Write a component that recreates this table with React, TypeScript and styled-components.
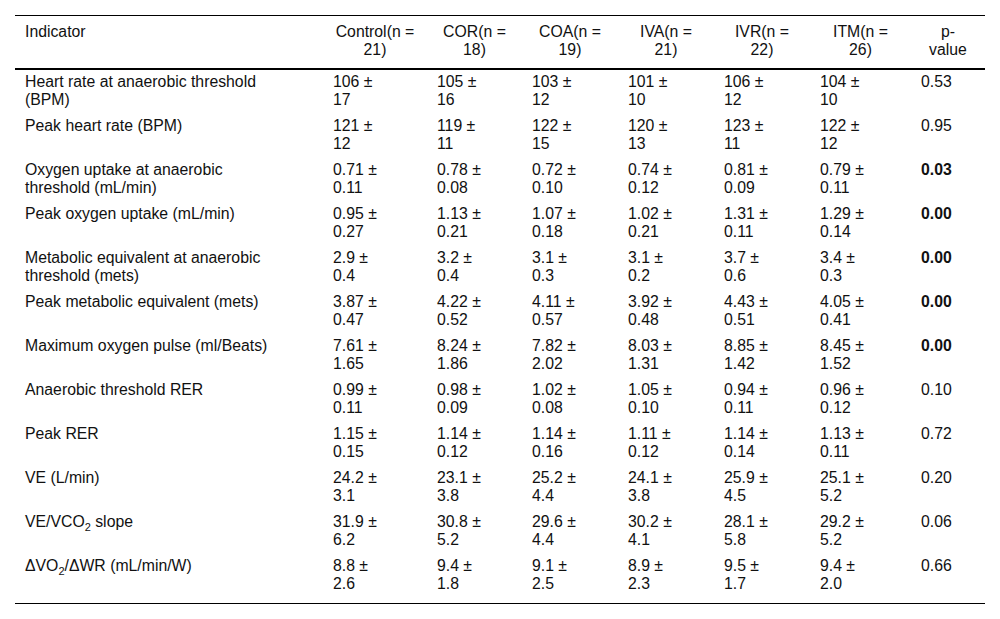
import React from 'react';
import styled, { createGlobalStyle } from 'styled-components';

const GlobalStyle = createGlobalStyle`
  html, body {
    margin: 0;
    padding: 0;
    background: #fff;
  }
`;

type Stat = [string, string];

type Row = {
  label: React.ReactNode;
  values: Stat[];
  p: string;
  significant?: boolean;
};

const groups = [
  { name: 'Control', n: 21, width: 104 },
  { name: 'COR', n: 18, width: 95 },
  { name: 'COA', n: 19, width: 96 },
  { name: 'IVA', n: 21, width: 96 },
  { name: 'IVR', n: 22, width: 96 },
  { name: 'ITM', n: 26, width: 101 },
];

const rows: Row[] = [
  {
    label: 'Heart rate at anaerobic threshold (BPM)',
    values: [['106', '17'], ['105', '16'], ['103', '12'], ['101', '10'], ['106', '12'], ['104', '10']],
    p: '0.53',
  },
  {
    label: 'Peak heart rate (BPM)',
    values: [['121', '12'], ['119', '11'], ['122', '15'], ['120', '13'], ['123', '11'], ['122', '12']],
    p: '0.95',
  },
  {
    label: 'Oxygen uptake at anaerobic threshold (mL/min)',
    values: [['0.71', '0.11'], ['0.78', '0.08'], ['0.72', '0.10'], ['0.74', '0.12'], ['0.81', '0.09'], ['0.79', '0.11']],
    p: '0.03',
    significant: true,
  },
  {
    label: 'Peak oxygen uptake (mL/min)',
    values: [['0.95', '0.27'], ['1.13', '0.21'], ['1.07', '0.18'], ['1.02', '0.21'], ['1.31', '0.11'], ['1.29', '0.14']],
    p: '0.00',
    significant: true,
  },
  {
    label: 'Metabolic equivalent at anaerobic threshold (mets)',
    values: [['2.9', '0.4'], ['3.2', '0.4'], ['3.1', '0.3'], ['3.1', '0.2'], ['3.7', '0.6'], ['3.4', '0.3']],
    p: '0.00',
    significant: true,
  },
  {
    label: 'Peak metabolic equivalent (mets)',
    values: [['3.87', '0.47'], ['4.22', '0.52'], ['4.11', '0.57'], ['3.92', '0.48'], ['4.43', '0.51'], ['4.05', '0.41']],
    p: '0.00',
    significant: true,
  },
  {
    label: 'Maximum oxygen pulse (ml/Beats)',
    values: [['7.61', '1.65'], ['8.24', '1.86'], ['7.82', '2.02'], ['8.03', '1.31'], ['8.85', '1.42'], ['8.45', '1.52']],
    p: '0.00',
    significant: true,
  },
  {
    label: 'Anaerobic threshold RER',
    values: [['0.99', '0.11'], ['0.98', '0.09'], ['1.02', '0.08'], ['1.05', '0.10'], ['0.94', '0.11'], ['0.96', '0.12']],
    p: '0.10',
  },
  {
    label: 'Peak RER',
    values: [['1.15', '0.15'], ['1.14', '0.12'], ['1.14', '0.16'], ['1.11', '0.12'], ['1.14', '0.14'], ['1.13', '0.11']],
    p: '0.72',
  },
  {
    label: 'VE (L/min)',
    values: [['24.2', '3.1'], ['23.1', '3.8'], ['25.2', '4.4'], ['24.1', '3.8'], ['25.9', '4.5'], ['25.1', '5.2']],
    p: '0.20',
  },
  {
    label: <>VE/VCO<Sub>2</Sub> slope</>,
    values: [['31.9', '6.2'], ['30.8', '5.2'], ['29.6', '4.4'], ['30.2', '4.1'], ['28.1', '5.8'], ['29.2', '5.2']],
    p: '0.06',
  },
  {
    label: <>ΔVO<Sub>2</Sub>/ΔWR (mL/min/W)</>,
    values: [['8.8', '2.6'], ['9.4', '1.8'], ['9.1', '2.5'], ['8.9', '2.3'], ['9.5', '1.7'], ['9.4', '2.0']],
    p: '0.66',
  },
];

function Sub({ children }: { children: React.ReactNode }) {
  return <SubText>{children}</SubText>;
}

const App = (): JSX.Element => (
  <Page>
    <GlobalStyle />
    <Table>
      <colgroup>
        <Col $width={308} />
        {groups.map((g) => (
          <Col key={g.name} $width={g.width} />
        ))}
        <Col $width={74} />
      </colgroup>
      <thead>
        <tr>
          <HeadCell $align="left">Indicator</HeadCell>
          {groups.map((g) => (
            <HeadCell key={g.name} $align="center">
              {g.name}(n =
              <br />
              {g.n})
            </HeadCell>
          ))}
          <HeadCell $align="center">
            p-
            <br />
            value
          </HeadCell>
        </tr>
      </thead>
      <tbody>
        {rows.map((row, i) => (
          <BodyRow key={i}>
            <LabelCell>{row.label}</LabelCell>
            {row.values.map(([mean, sd], j) => (
              <Cell key={j}>
                {mean} ±
                <br />
                {sd}
              </Cell>
            ))}
            <Cell $bold={row.significant}>{row.p}</Cell>
          </BodyRow>
        ))}
      </tbody>
    </Table>
  </Page>
);

export default App;

const Page = styled.div`
  padding: 15px;
  font-family: 'Liberation Sans', Arial, sans-serif;
  font-size: 15.8px;
  line-height: 18px;
  color: #111;
`;

const Table = styled.table`
  width: 100%;
  table-layout: fixed;
  border-collapse: collapse;
  border-top: 1px solid #000;
  border-bottom: 1px solid #000;
`;

const Col = styled.col<{ $width: number }>`
  width: ${(p) => p.$width}px;
`;

const HeadCell = styled.th<{ $align: 'left' | 'center' }>`
  font-weight: normal;
  text-align: ${(p) => p.$align};
  vertical-align: top;
  padding: 7px 10px 9px;
  border-bottom: 2px solid #000;
`;

const BodyRow = styled.tr`
  &:last-child td {
    padding-bottom: 10px;
  }
`;

const Cell = styled.td<{ $bold?: boolean }>`
  vertical-align: top;
  text-align: left;
  padding: 3px 10px 5px;
  font-weight: ${(p) => (p.$bold ? 'bold' : 'normal')};
`;

const LabelCell = styled(Cell)`
  padding-right: 40px;
`;

const SubText = styled.sub`
  font-size: 11px;
  line-height: 0;
  vertical-align: -4px;
`;
